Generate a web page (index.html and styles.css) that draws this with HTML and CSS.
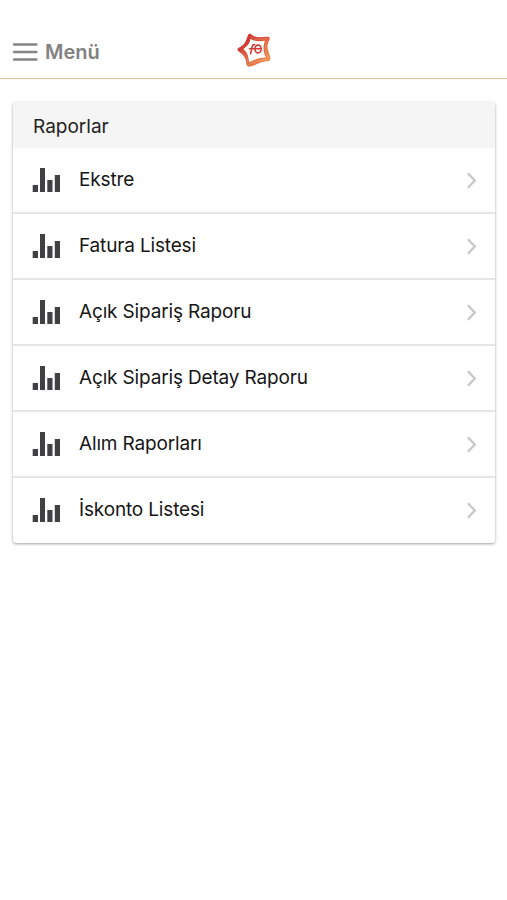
FILE: index.html
```html
<!DOCTYPE html>
<html lang="tr">
<head>
<meta charset="utf-8">
<title>Raporlar</title>
<link rel="stylesheet" href="styles.css">
</head>
<body>
<svg class="defs" aria-hidden="true">
  <symbol id="bars" viewBox="0 0 28 24"><path d="M-.3 17H5v7H-.3zM7 0h5v24H7zM14.3 12h5.2v12h-5.2zM21.8 7H27v17h-5.2z" fill="#414143"/></symbol>
  <symbol id="chevron" viewBox="0 0 10 17"><path d="M.9 1.3 7.8 8.5 .9 15.7" fill="none" stroke="#c7c7c9" stroke-width="2.3"/></symbol>
</svg>
<header class="toolbar">
  <a class="menu">
    <svg class="burger" viewBox="0 0 25 18"><path d="M2 1.5h22.5M2 9h22.5M2 16.5h22.5" stroke="#858585" stroke-width="2.3" stroke-linecap="round"/></svg>
    <span class="menu-label">Menü</span>
  </a>
  <svg class="logo" viewBox="0 0 34 34">
    <defs><linearGradient id="flame" x1="0" y1="0" x2="1" y2="1"><stop offset="0.2" stop-color="#cf3430"/><stop offset="0.55" stop-color="#df6037"/><stop offset="1" stop-color="#f5a35a"/></linearGradient></defs>
    <path fill="url(#flame)" fill-rule="evenodd" d="M11.8 1C13.5 -.2 15 2.6 18.5 3.7C22.5 5 27.5 3 32 4C34 5 31.5 8.5 30.5 12C29.7 16 32.5 20 33.4 24.5C33.8 28.5 31.5 28.5 28 28.5C23 28.5 18 33 13 33.6C9.3 34 9.5 31 8.8 27.5C8 23 4.5 20.5 .9 17.8C-.4 16 1.2 14.8 4.3 13.2C10 10 9.5 3.2 11.8 1ZM13.3 5.8C13.3 10 10.4 13.2 6.2 16C10 19 11.7 23 12 29.2C17 27 22 24.4 29 24.6C26.5 20 25.4 14.5 28 7.8C22.5 8.7 17.5 8.5 13.3 5.8Z"/>
    <path d="M13 3.3C17 7 23 6.4 30 5.7M30.5 7C26.8 13 29.2 19.5 31.5 25.8M29.8 26.5C23.5 26 17 29.5 11.5 31.5M10.5 29.8C10.5 24 7.5 20 3.8 17.2" fill="none" stroke="#fff" stroke-width=".5" opacity=".45"/>
    <g fill="none" stroke="#d43c35" stroke-width="1.6" stroke-linecap="round">
      <path d="M13.6 20.8 15.3 13.2Q15.8 11.3 17.7 11.7M12.5 15.7H24"/>
      <ellipse cx="21" cy="16" rx="3.1" ry="3.9"/>
    </g>
  </svg>
</header>
<main class="card">
  <h1 class="card-title">Raporlar</h1>
  <ul class="list">
    <li class="row"><svg class="bars"><use href="#bars"/></svg><span class="label">Ekstre</span><svg class="chevron"><use href="#chevron"/></svg></li>
    <li class="row"><svg class="bars"><use href="#bars"/></svg><span class="label">Fatura Listesi</span><svg class="chevron"><use href="#chevron"/></svg></li>
    <li class="row"><svg class="bars"><use href="#bars"/></svg><span class="label">Açık Sipariş Raporu</span><svg class="chevron"><use href="#chevron"/></svg></li>
    <li class="row"><svg class="bars"><use href="#bars"/></svg><span class="label">Açık Sipariş Detay Raporu</span><svg class="chevron"><use href="#chevron"/></svg></li>
    <li class="row"><svg class="bars"><use href="#bars"/></svg><span class="label">Alım Raporları</span><svg class="chevron"><use href="#chevron"/></svg></li>
    <li class="row"><svg class="bars"><use href="#bars"/></svg><span class="label">İskonto Listesi</span><svg class="chevron"><use href="#chevron"/></svg></li>
  </ul>
</main>
</body>
</html>
```
FILE: styles.css
```css
* { box-sizing: border-box; }
svg { overflow: visible; }
body {
  margin: 0;
  min-height: 100vh;
  background: #fff;
  font-family: Inter, "Liberation Sans", sans-serif;
  color: #161616;
}
.defs { display: block; width: 0; height: 0; }
symbol { overflow: visible; }
.toolbar {
  display: grid;
  grid-template-columns: 1fr 34px 1fr;
  align-items: center;
  height: 79px;
  padding: 26px 12px 4px;
  border-bottom: 1px solid #f5bb92;
}
.menu { display: flex; align-items: center; gap: 8px; padding-top: 4px; }
.burger { width: 25px; height: 18px; }
.menu-label { font-size: 20px; line-height: 24px; font-weight: 600; color: #828282; }
.logo { width: 34px; height: 34px; }
.card {
  margin: 23px 12px 0 13px;
  overflow: hidden;
  border-radius: 3px;
  background: #fff;
  box-shadow: 0 1px 3px rgba(0, 0, 0, .38);
}
.card-title {
  height: 46px;
  margin: 0;
  padding-left: 20px;
  background: #f5f5f5;
  font-size: 19px;
  line-height: 49px;
  font-weight: 400;
  color: #222;
}
.list { margin: 0; padding: 0; list-style: none; }
.row {
  display: flex;
  align-items: center;
  height: 66px;
  padding: 0 18px 0 20px;
  border-bottom: 2px solid #e6e6e6;
}
.row:last-child { border-bottom: 0; height: 65px; padding-bottom: 1px; }
.bars { width: 28px; height: 24px; }
.label { flex: 1; margin: -1px 0 0 18px; font-size: 19px; line-height: 24px; letter-spacing: -.16px; }
.chevron { width: 10px; height: 17px; }
```
